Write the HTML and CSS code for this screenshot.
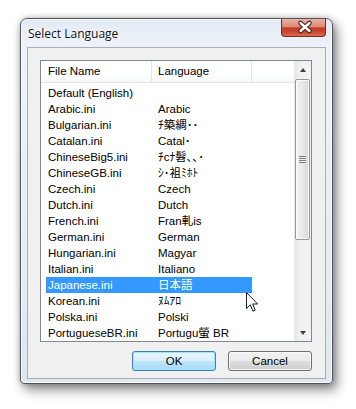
FILE: index.html
```html
<!DOCTYPE html>
<html>
<head>
    <title>Select Language</title>
    <link rel="stylesheet" href="styles.css">
</head>
<body>
    <div class="window">
        <div class="titlebar">
            <span class="title">Select Language</span>
            <div class="close">
                <svg width="45" height="18" viewBox="0 0 45 18">
                    <path d="M19.5 5 L28.5 13 M28.5 5 L19.5 13" stroke="#4b1d16" stroke-width="4.6" stroke-linecap="round"/>
                    <path d="M19.5 5 L28.5 13 M28.5 5 L19.5 13" stroke="#ffffff" stroke-width="2.4" stroke-linecap="round"/>
                </svg>
            </div>
        </div>
        <div class="client">
            <div class="list">
                <div class="list-main">
                    <div class="header">
                        <div class="hcol c1">File Name</div>
                        <div class="hcol c2">Language</div>
                        <div class="hcol c3"></div>
                    </div>
                    <div class="rows">
                        <div class="row"><span class="c1">Default (English)</span><span class="c2"></span></div>
                        <div class="row"><span class="c1">Arabic.ini</span><span class="c2">Arabic</span></div>
                        <div class="row"><span class="c1">Bulgarian.ini</span><span class="c2">ﾁ築綢･･</span></div>
                        <div class="row"><span class="c1">Catalan.ini</span><span class="c2">Catal･</span></div>
                        <div class="row"><span class="c1">ChineseBig5.ini</span><span class="c2">ﾁcﾅ髫､､･</span></div>
                        <div class="row"><span class="c1">ChineseGB.ini</span><span class="c2">ｼ･袓ﾐﾎﾄ</span></div>
                        <div class="row"><span class="c1">Czech.ini</span><span class="c2">Czech</span></div>
                        <div class="row"><span class="c1">Dutch.ini</span><span class="c2">Dutch</span></div>
                        <div class="row"><span class="c1">French.ini</span><span class="c2">Fran軋is</span></div>
                        <div class="row"><span class="c1">German.ini</span><span class="c2">German</span></div>
                        <div class="row"><span class="c1">Hungarian.ini</span><span class="c2">Magyar</span></div>
                        <div class="row"><span class="c1">Italian.ini</span><span class="c2">Italiano</span></div>
                        <div class="row selected"><span class="c1">Japanese.ini</span><span class="c2">日本語</span></div>
                        <div class="row"><span class="c1">Korean.ini</span><span class="c2">ﾇﾑｱﾛ</span></div>
                        <div class="row"><span class="c1">Polska.ini</span><span class="c2">Polski</span></div>
                        <div class="row"><span class="c1">PortugueseBR.ini</span><span class="c2">Portugu螢 BR</span></div>
                    </div>
                </div>
                <div class="scrollbar">
                    <div class="sb-btn"><span class="arrow-up"></span></div>
                    <div class="sb-track">
                        <div class="thumb"><span class="grip"></span></div>
                    </div>
                    <div class="sb-btn"><span class="arrow-down"></span></div>
                </div>
            </div>
            <div class="buttons">
                <button class="btn default">OK</button>
                <button class="btn">Cancel</button>
            </div>
        </div>
    </div>

    <svg class="cursor" width="13" height="21" viewBox="0 0 13 21">
        <path d="M0.5 0.5 L0.5 16.5 L4.3 12.8 L6.9 19.2 L9.2 18.2 L6.7 12 L11.7 12 Z" fill="#ffffff" stroke="#1b1d2e" stroke-width="1" stroke-linejoin="round"/>
    </svg>
</body>
</html>
```

FILE: styles.css
```css
body {
    margin: 0;
    width: 356px;
    height: 409px;
    overflow: hidden;
    background: #ffffff;
    font-family: 'Liberation Sans', 'Noto Sans CJK JP', sans-serif;
    position: relative;
}
.window {
    margin: 18px 0 0 20px;
    width: 313px;
    height: 366px;
    box-sizing: border-box;
    border: 1px solid #50565d;
    border-radius: 7px 7px 4px 4px;
    padding: 0 6px 4px 6px;
    background: linear-gradient(180deg, #e2eaf4 0, #eef3f9 28px, #e6edf5 60%, #dfe7f0 100%);
    box-shadow: 4px 6px 12px rgba(0, 0, 0, 0.45), 0 0 6px rgba(0, 0, 0, 0.25), inset 0 0 0 1px rgba(255, 255, 255, 0.75);
    display: flex;
    flex-direction: column;
}
.titlebar {
    height: 28px;
    display: flex;
    justify-content: space-between;
    align-items: flex-start;
    flex-shrink: 0;
}
.title {
    font-family: 'Open Sans', 'Liberation Sans', sans-serif;
    font-size: 12px;
    color: #111111;
    margin: 6px 0 0 1px;
    text-shadow: 0 0 6px #ffffff, 0 0 3px #ffffff;
}
.close {
    width: 45px;
    height: 18px;
    box-sizing: border-box;
    border: 1px solid #7a2c22;
    border-top: none;
    border-radius: 0 0 4px 4px;
    background: linear-gradient(180deg, #eab1a4 0, #de8b78 45%, #c33e29 52%, #c8452f 75%, #dc6d52 100%);
    overflow: hidden;
}
.close svg {
    display: block;
    margin: -1px 0 0 -1px;
}
.client {
    flex: 1;
    border: 1px solid #a6aeb8;
    background: #f0f0f0;
    padding: 12px 13px 0 12px;
    display: flex;
    flex-direction: column;
}
.list {
    height: 282px;
    box-sizing: border-box;
    border: 1px solid #828790;
    background: #ffffff;
    display: flex;
}
.list-main {
    flex: 1;
    font-size: 11.5px;
    color: #000000;
}
.header {
    height: 22px;
    box-sizing: border-box;
    border-bottom: 1px solid #e5e5e5;
    display: flex;
    background: linear-gradient(180deg, #ffffff 0, #ffffff 60%, #f7f8f9 100%);
}
.hcol {
    line-height: 21px;
    box-sizing: border-box;
    border-right: 1px solid #e3e5e8;
}
.hcol.c1 {
    width: 111px;
    padding-left: 7px;
}
.hcol.c2 {
    width: 100px;
    padding-left: 6px;
}
.hcol.c3 {
    flex: 1;
    border-right: none;
}
.rows {
    margin-top: 2px;
}
.row {
    height: 16px;
    line-height: 16px;
    width: 206px;
    margin-left: 5px;
    display: flex;
    white-space: nowrap;
}
.row .c1 {
    width: 106px;
    padding-left: 2px;
    box-sizing: border-box;
}
.row .c2 {
    padding-left: 6px;
}
.row.selected {
    background: #3399ff;
    color: #ffffff;
}
.scrollbar {
    width: 17px;
    display: flex;
    flex-direction: column;
    background: linear-gradient(90deg, #e6e6e6 0, #f2f2f2 40%, #f2f2f2 100%);
}
.sb-btn {
    height: 17px;
    display: flex;
    justify-content: center;
    align-items: center;
    flex-shrink: 0;
}
.arrow-up {
    width: 0;
    height: 0;
    border-left: 3.5px solid transparent;
    border-right: 3.5px solid transparent;
    border-bottom: 4px solid #3f3f3f;
}
.arrow-down {
    width: 0;
    height: 0;
    border-left: 3.5px solid transparent;
    border-right: 3.5px solid transparent;
    border-top: 4px solid #3f3f3f;
}
.sb-track {
    flex: 1;
    padding-top: 1px;
}
.thumb {
    height: 161px;
    margin: 0 1px;
    box-sizing: border-box;
    border: 1px solid #979797;
    border-radius: 2px;
    background: linear-gradient(90deg, #f3f3f3 0, #e9e9e9 50%, #d8d8d8 100%);
    box-shadow: inset 0 0 0 1px rgba(255, 255, 255, 0.8);
    display: flex;
    justify-content: center;
    align-items: center;
}
.grip {
    width: 7px;
    height: 7px;
    background: repeating-linear-gradient(180deg, #7d7d7d 0, #7d7d7d 1px, #f0f0f0 1px, #f0f0f0 2px);
}
.buttons {
    margin-top: 9px;
    display: flex;
    justify-content: flex-end;
    gap: 12px;
}
.btn {
    width: 84px;
    height: 20px;
    padding: 0;
    font-family: 'Liberation Sans', 'Noto Sans CJK JP', sans-serif;
    font-size: 11.5px;
    color: #000000;
    border: 1px solid #707070;
    border-radius: 3px;
    background: linear-gradient(180deg, #f2f2f2 0, #ebebeb 50%, #dddddd 51%, #cfcfcf 100%);
    box-shadow: inset 0 0 0 1px rgba(255, 255, 255, 0.7);
}
.btn.default {
    border-color: #3c7fb1;
    background: linear-gradient(180deg, #eaf6fd 0, #d9f0fc 50%, #bee6fd 51%, #a7d9f5 100%);
    box-shadow: inset 0 0 0 1px #a5e3fb;
}
.cursor {
    position: absolute;
    left: 246px;
    top: 292px;
}
```
